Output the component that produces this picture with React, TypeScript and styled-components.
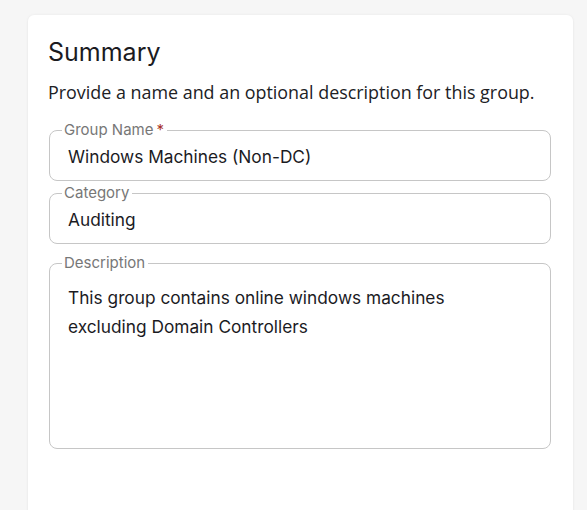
import React from 'react';
import styled, { createGlobalStyle } from 'styled-components';

const GlobalStyle = createGlobalStyle`
  html, body {
    margin: 0;
    padding: 0;
    background: #f6f6f6;
  }
  body {
    font-family: Inter, "Noto Sans", sans-serif;
  }
`;

const Page = styled.div`
  padding: 15px 14px 0 28px;
  height: 510px;
  box-sizing: border-box;
  overflow: hidden;
`;

const Card = styled.section`
  background: #ffffff;
  border-radius: 6px;
  box-shadow: 0 0 3px rgba(0, 0, 0, 0.06), 0 1px 2px rgba(0, 0, 0, 0.04);
  padding: 22px 22px 0 20px;
  min-height: 520px;
  box-sizing: border-box;
`;

const Title = styled.h2`
  margin: 0;
  font-family: Inter, sans-serif;
  font-weight: 400;
  font-size: 25px;
  line-height: 30px;
  color: #1b1b1f;
`;

const Subtitle = styled.p`
  margin: 13px 0 18px;
  font-family: "Open Sans", sans-serif;
  font-size: 17.9px;
  line-height: 24px;
  color: #202124;
`;

const Fields = styled.div`
  display: flex;
  flex-direction: column;
  padding-left: 1px;
`;

interface FieldProps {
  label: string;
  required?: boolean;
  multiline?: boolean;
  gapAfter?: number;
  children: React.ReactNode;
}

const Outline = styled.fieldset<{ $multiline?: boolean; $gapAfter: number }>`
  margin: 0 0 ${({ $gapAfter }) => $gapAfter}px;
  padding: ${({ $multiline }) => ($multiline ? '12px 18px 0' : '0 18px')};
  border: 1px solid #c6c6c6;
  border-radius: 8px;
  height: ${({ $multiline }) => ($multiline ? '194px' : '59px')};
  box-sizing: border-box;
  min-width: 0;
`;

const Legend = styled.legend`
  margin-left: -6px;
  padding: 0 3px 0 2px;
  font-family: Inter, sans-serif;
  font-size: 15px;
  line-height: 16px;
  color: #777777;
`;

const Required = styled.span`
  color: #a8332a;
  margin-left: 3px;
`;

const Value = styled.div<{ $multiline?: boolean }>`
  font-family: Inter, sans-serif;
  font-size: 17.3px;
  line-height: ${({ $multiline }) => ($multiline ? '29px' : '24px')};
  color: #1b1b1f;
  margin-top: ${({ $multiline }) => ($multiline ? '0' : '7px')};
  max-width: ${({ $multiline }) => ($multiline ? '420px' : 'none')};
`;

const Field: React.FC<FieldProps> = ({ label, required, multiline, gapAfter = 4, children }) => (
  <Outline $multiline={multiline} $gapAfter={gapAfter}>
    <Legend>
      {label}
      {required && <Required>*</Required>}
    </Legend>
    <Value $multiline={multiline}>{children}</Value>
  </Outline>
);

export default function App() {
  return (
    <>
      <GlobalStyle />
      <Page>
        <Card>
          <Title>Summary</Title>
          <Subtitle>Provide a name and an optional description for this group.</Subtitle>
          <Fields>
            <Field label="Group Name" required>
              Windows Machines (Non-DC)
            </Field>
            <Field label="Category" gapAfter={11}>
              Auditing
            </Field>
            <Field label="Description" multiline>
              This group contains online windows machines excluding Domain Controllers
            </Field>
          </Fields>
        </Card>
      </Page>
    </>
  );
}
